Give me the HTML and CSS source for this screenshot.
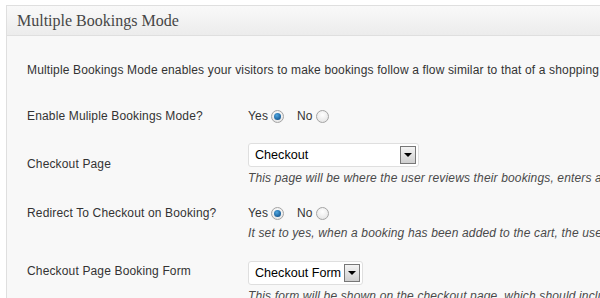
FILE: index.html
```html
<!DOCTYPE html>
<html lang="en">
<head>
  <meta charset="UTF-8" />
  <title>Multiple Bookings Mode</title>
  <link rel="stylesheet" href="styles.css">
</head>
<body>
  <div class="postbox">
    <h3 class="hndle">Multiple Bookings Mode</h3>
    <div class="inside">
      <p class="intro">Multiple Bookings Mode enables your visitors to make bookings follow a flow similar to that of a shopping cart, allowing them to book multiple events.</p>

      <div class="row row-first">
        <div class="label">Enable Muliple Bookings Mode?</div>
        <div class="field">
          <div class="radios">
            Yes <span class="radio checked"></span>
            <span class="gap"></span>
            No <span class="radio"></span>
          </div>
        </div>
      </div>

      <div class="row row-tight">
        <div class="label label-low">Checkout Page</div>
        <div class="field">
          <div class="select wide"><span>Checkout</span><i class="arrow"></i></div>
          <p class="desc">This page will be where the user reviews their bookings, enters additional information and completes the booking.</p>
        </div>
      </div>

      <div class="row row-tighter">
        <div class="label">Redirect To Checkout on Booking?</div>
        <div class="field">
          <div class="radios">
            Yes <span class="radio checked"></span>
            <span class="gap"></span>
            No <span class="radio"></span>
          </div>
          <p class="desc">It set to yes, when a booking has been added to the cart, the user will be redirected to the checkout page.</p>
        </div>
      </div>

      <div class="row">
        <div class="label label-nudge">Checkout Page Booking Form</div>
        <div class="field">
          <div class="select"><span>Checkout Form</span><i class="arrow"></i></div>
          <p class="desc">This form will be shown on the checkout page, which should include general information about the user.</p>
        </div>
      </div>
    </div>
  </div>
</body>
</html>
```

FILE: styles.css
```css
* { box-sizing: border-box; margin: 0; padding: 0; }
body { background: #fff; color: #333; font-family: 'Liberation Sans', Arial, sans-serif; font-size: 12px; letter-spacing: 0.15px; overflow: hidden; width: 600px; height: 298px; }
.postbox { margin: 5px 0 0 6px; width: 900px; border: 1px solid #dfdfdf; border-right: none; background: #f8f8f8; }
.hndle { height: 30px; line-height: 29px; padding-left: 10px; font-family: 'Liberation Serif', Georgia, serif; font-weight: normal; font-size: 16px; letter-spacing: 0; color: #464646; background: linear-gradient(#f9f9f9, #ececec); border-bottom: 1px solid #dfdfdf; }
.inside { padding: 25px 0 0 20px; }
.intro { line-height: 18px; white-space: nowrap; }
.row { display: flex; margin-top: 19px; }
.row-first { margin-top: 28px; }
.row-tight { margin-top: 18px; }
.row-tighter { margin-top: 17px; }
.label { width: 221px; flex-shrink: 0; line-height: 18px; }
.label-low { padding-top: 12px; }
.label-nudge { padding-top: 1px; }
.field { line-height: 18px; white-space: nowrap; }
.radios { display: flex; align-items: center; height: 18px; }
.radio { display: inline-block; width: 13px; height: 13px; margin-left: 3px; border-radius: 50%; border: 1px solid #a4a4a4; background: radial-gradient(circle at 50% 35%, #fff, #e0e0e0); position: relative; }
.radio.checked::after { content: ''; position: absolute; left: 2px; top: 2px; width: 7px; height: 7px; border-radius: 50%; background: radial-gradient(circle at 40% 35%, #4fa6e0, #1a5f99 70%, #123c60); }
.gap { display: inline-block; width: 13px; }
.select { display: inline-flex; align-items: center; justify-content: space-between; height: 24px; padding: 0 2px 0 6px; background: #fff; border: 1px solid #dfdfdf; border-radius: 3px; font-size: 12.6px; letter-spacing: 0; color: #000; }
.select.wide { width: 171px; }
.select span { margin-right: 3px; }
.arrow { display: flex; align-items: center; justify-content: center; width: 16px; height: 18px; border: 1px solid #777; background: linear-gradient(#f4f4f4, #cfcfcf); }
.arrow::after { content: ''; border-left: 4px solid transparent; border-right: 4px solid transparent; border-top: 4px solid #000; }
.desc { margin-top: 2px; font-style: italic; color: #4a4a4a; line-height: 18px; }
```
